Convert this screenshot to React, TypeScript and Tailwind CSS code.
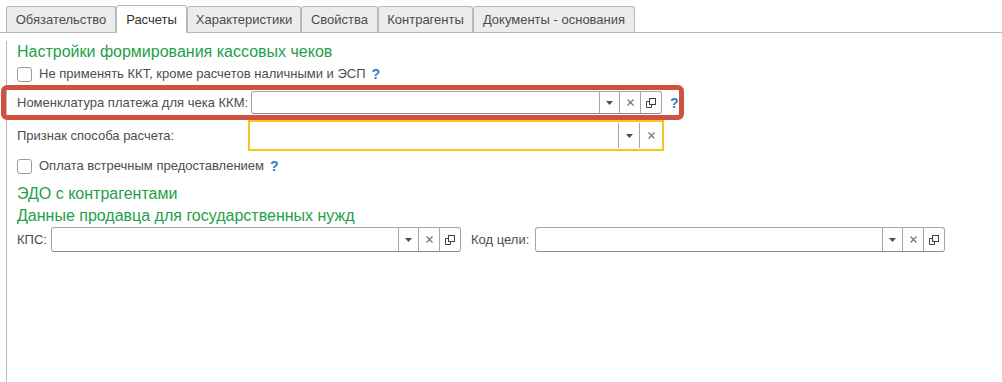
import React from "react";

const font = { fontFamily: '"Liberation Sans", Arial, sans-serif' };

const tabs = [
  { label: "Обязательство", w: "w-[110px]" },
  { label: "Расчеты", w: "w-[71px]", active: true },
  { label: "Характеристики", w: "w-[114px]" },
  { label: "Свойства", w: "w-[77px]" },
  { label: "Контрагенты", w: "w-[95px]" },
  { label: "Документы - основания", w: "w-[162px]" },
];

const Arrow = () => (
  <svg width="7" height="4" viewBox="0 0 7 4">
    <path d="M0 0H7L3.5 4Z" fill="#4d4d4d" />
  </svg>
);

const Cross = () => (
  <svg width="7" height="7" viewBox="0 0 7 7">
    <path d="M0.5 0.5L6.5 6.5M6.5 0.5L0.5 6.5" stroke="#707070" strokeWidth="1.1" />
  </svg>
);

const OpenIcon = () => (
  <svg width="12" height="12" viewBox="0 0 12 12">
    <rect x="4.5" y="1.5" width="6" height="6" fill="none" stroke="#404040" />
    <path d="M4.5 4.5H1.5V10.5H6.5V7.5" fill="none" stroke="#404040" />
  </svg>
);

const Help = () => (
  <span className="text-[14px] font-bold text-[#2a7fc8]">?</span>
);

const Checkbox = ({ label }: { label: string }) => (
  <div className="flex h-[20px] items-center gap-[7px]">
    <span className="h-[15px] w-[15px] rounded-[3px] border border-[#9a9a9a] bg-white" />
    <span className="text-[13px] text-[#4d4d4d]">{label}</span>
  </div>
);

// input with the usual 1C buttons on the right
const Field = ({
  className,
  open = true,
  yellow = false,
}: {
  className: string;
  open?: boolean;
  yellow?: boolean;
}) => (
  <div
    className={
      yellow
        ? `${className} flex border-2 border-[#f5c61a] bg-white`
        : `${className} flex rounded-[3px] border border-[#a6a6a6] border-b-[#8c8c8c] bg-white`
    }
  >
    <div className="flex-1" />
    <div className={yellow ? "flex w-[21px] items-center justify-center border-l border-[#a6a6a6] my-[1px]" : "flex w-[20px] items-center justify-center border-l border-[#a6a6a6]"}>
      <Arrow />
    </div>
    <div className={yellow ? "flex w-[23px] items-center justify-center border-l border-[#a6a6a6] my-[1px]" : "flex w-[21px] items-center justify-center border-l border-[#a6a6a6]"}>
      <Cross />
    </div>
    {open && (
      <div className="flex w-[21px] items-center justify-center border-l border-[#a6a6a6]">
        <OpenIcon />
      </div>
    )}
  </div>
);

export default function App() {
  return (
    <div className="h-[382px] w-[1002px] overflow-hidden bg-white" style={font}>
      <div className="flex h-[33px] items-end border-b border-[#b8b8b8] pl-[6px]">
        {tabs.map((t) => (
          <div
            key={t.label}
            className={
              t.active
                ? `${t.w} -mb-[1px] flex h-[28px] items-center justify-center rounded-t-[3px] border border-b-0 border-[#b8b8b8] bg-white text-[13px] text-[#333]`
                : `${t.w} flex h-[26px] items-center justify-center rounded-t-[3px] border border-b-0 border-[#b8b8b8] bg-[#ececec] text-[13px] text-[#4d4d4d]`
            }
          >
            {t.label}
          </div>
        ))}
      </div>

      <div className="ml-[6px] h-[349px] border-l border-[#b8b8b8] pl-[10px]">
        <div className="mt-[8px] flex h-[22px] items-center text-[16px] text-[#23a049]">
          Настройки формирования кассовых чеков
        </div>
        <div className="mt-[1px] flex h-[20px] items-center gap-[6px]">
          <Checkbox label="Не применять ККТ, кроме расчетов наличными и ЭСП" />
          <Help />
        </div>

        <div className="-ml-[16px] mt-[1px] flex h-[35px] w-[683px] items-center rounded-[6px] border-[5px] border-[#d15140] pl-[11px]">
          <span className="w-[234px] text-[13px] text-[#4d4d4d]">Номенклатура платежа для чека ККМ:</span>
          <Field className="h-[23px] w-[411px]" />
          <span className="ml-[8px]">
            <Help />
          </span>
        </div>

        <div className="flex h-[31px] items-center">
          <span className="w-[231px] text-[13px] text-[#4d4d4d]">Признак способа расчета:</span>
          <Field className="h-[31px] w-[416px]" open={false} yellow />
        </div>

        <div className="mt-[5px] flex h-[20px] items-center gap-[6px]">
          <Checkbox label="Оплата встречным предоставлением" />
          <Help />
        </div>

        <div className="mt-[7px] flex h-[22px] items-center text-[16px] text-[#23a049]">
          ЭДО с контрагентами
        </div>
        <div className="flex h-[22px] items-center text-[16px] text-[#23a049]">
          Данные продавца для государственных нужд
        </div>

        <div className="flex h-[25px] items-center">
          <span className="w-[34px] text-[13px] text-[#4d4d4d]">КПС:</span>
          <Field className="h-[25px] w-[410px]" />
          <span className="ml-[10px] w-[64px] text-[13px] text-[#4d4d4d]">Код цели:</span>
          <Field className="h-[25px] w-[410px]" />
        </div>
      </div>
    </div>
  );
}
